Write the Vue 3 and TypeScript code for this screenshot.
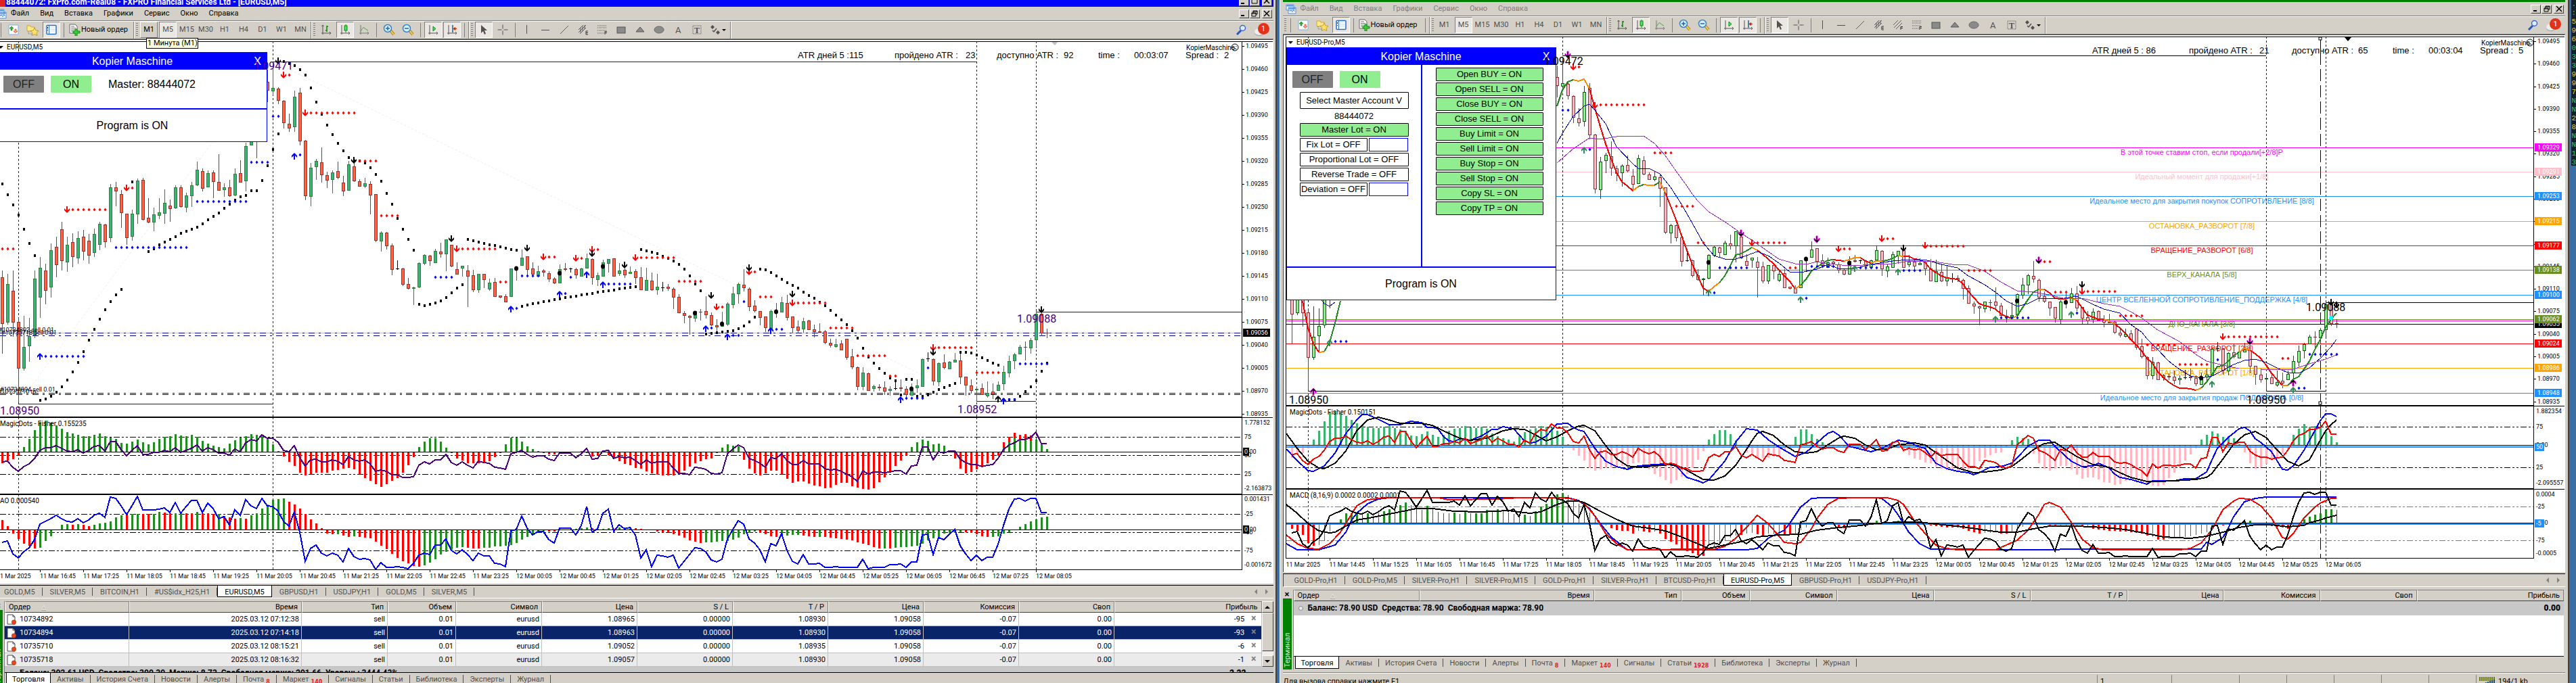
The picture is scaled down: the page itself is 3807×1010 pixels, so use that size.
<script setup lang="ts">
type Candle = { k: string; h: number; t: number; b: number; l: number }
type Mark = { i: number; y: number; kind: string }
type Pt = [number, number]

const nums = (s: string): number[] => s.trim().split(/[\s,]+/).map(Number)

const candles: Candle[] = `r400,410,479,523 g405,420,477,480 r400,430,477,498 r470,476,545,595 g467,513,545,548 g470,497,512,535
g400,412,496,500 g380,396,440,470 r390,400,430,450 g360,370,425,440 r350,365,392,410 r328,339,386,400 g350,362,388,402
r345,358,380,395 g342,352,382,390 r340,350,372,385 r346,356,378,390 g338,346,374,380 g328,331,362,370 r331,332,358,366
g272,277,352,358 r269,277,283,305 r281,287,315,337 r316,316,352,362 g310,316,350,356 g264,267,317,331 r263,266,325,326
r293,322,329,330 g307,317,329,342 g293,314,319,324 g280,300,316,331 r295,304,309,328 g274,277,308,309 r274,277,306,307
g285,289,307,314 g269,274,290,306 g239,251,274,275 r249,253,279,283 g252,256,277,277 r252,255,269,293 r228,269,282,282
g271,277,281,291 r266,277,290,291 g249,257,289,290 r237,256,270,270 g211,216,268,283 g150,160,215,215 r150,160,200,234
g110,120,180,190 r103,121,134,151 g92,130,135,141 r129,131,149,154 r148,149,182,190 r168,183,190,195 g134,143,188,195
r130,137,209,215 r207,208,290,296 g241,248,291,305 g235,238,247,266 r218,240,259,270 r254,259,267,278 g252,255,266,286
r239,253,263,265 r260,270,283,290 g238,243,282,282 r240,246,268,269 r265,268,276,276 g263,271,276,278 r268,272,289,317
r287,287,356,358 g342,344,357,372 r343,344,364,369 r360,363,399,407 d385,397,398,399 r396,397,421,423 r411,420,427,428
g424,425,427,451 g388,389,425,426 g376,377,390,392 r377,378,386,393 g368,371,389,389 r359,372,376,381 g354,354,376,401
r362,362,394,395 r388,398,406,406 g393,393,397,409 r392,400,409,454 r399,407,429,432 g405,405,429,433 r405,405,414,426
g412,418,428,430 r411,417,439,439 r437,437,440,441 r435,438,447,447 g397,397,439,439 g395,397,398,415 g369,381,393,393
r379,379,399,409 r388,397,406,409 g393,401,409,409 r398,400,403,409 r401,404,413,417 r410,412,419,420 g391,398,419,419
r389,397,399,401 d396,397,398,403 r396,398,407,412 g396,397,409,409 g375,382,397,397 r382,383,411,421 g403,407,414,423
g384,388,409,409 g383,383,390,403 r382,382,409,409 g389,400,405,408 r397,399,407,411 g394,402,405,405 r398,401,411,420
r395,410,429,429 g396,414,430,430 r403,415,429,430 g405,424,429,436 d417,425,426,431 r420,424,427,430 r425,427,440,457
r435,439,463,463 r460,463,467,478 r466,467,470,495 g460,460,471,476 r457,461,462,474 r438,460,466,471 r462,466,481,482
r472,481,484,491 g461,480,483,483 g447,449,480,482 g424,434,451,456 g418,420,435,449 r398,421,426,431 r425,427,454,460
r444,452,460,462 r460,460,470,481 r468,468,485,491 g458,460,487,493 r448,460,461,470 g439,447,462,462 r436,448,470,474
r468,468,485,493 r474,483,489,493 g470,475,487,492 r473,474,488,488 r480,487,491,499 r478,490,492,492 r488,490,507,509
r501,507,511,514 g501,509,513,514 r503,508,518,518 r501,501,529,532 r516,527,543,546 r542,543,572,577 g543,551,572,577
r551,552,578,578 g569,571,575,579 r568,572,574,578 r564,573,579,584 g571,575,578,585 d563,574,575,577 r561,573,575,579
r571,575,584,587 g567,576,585,585 g561,570,574,581 g530,531,572,572 d521,530,531,535 r530,531,564,570 g536,537,565,571
r524,536,544,546 g534,535,546,546 g522,532,536,536 r522,533,558,568 r557,557,570,585 r561,570,578,582 g571,575,577,593
r567,574,584,584 g564,581,586,588 r567,579,583,590 g564,569,578,578 g541,550,568,577 g526,534,552,558 g522,524,534,546
g510,513,524,524 r505,513,514,533 g500,503,515,523 g460,464,503,515 r458,464,493,497 r486,492,493,500`
  .split(/\s+/).map((s) => {
    const [h, t, b, l] = nums(s.slice(1))
    return { k: s[0], h, t, b, l }
  })

const fisher = nums(`-17 -13 -11 -5 7 19 32 44 46 43 39 34 29 27 25 23 23 25 27 23 21 19 13 12 15 18 14 11 14 19 22 23 26 24 23 25 22 16 12 9
7 5 12 17 21 23 26 25 24 19 11 1 -7 -15 -21 -31 -35 -33 -31 -31 -31 -28 -27 -25 -24 -26 -33 -39 -43 -48 -52 -48 -43 -39 -31 -20 -8 7 15 20
20 15 6 -2 -10 -13 -17 -17 -17 -16 -14 -8 -2 11 21 21 15 8 4 1 -2 -4 -4 -1 0 0 -1 1 -2 -7 -5 0 -5 -9 -14 -18 -20 -24 -25 -29
-32 -34 -35 -35 -35 -33 -28 -22 -17 -14 -11 -10 -2 6 11 9 8 -12 -25 -32 -35 -32 -28 -28 -33 -40 -46 -44 -44 -47 -50 -51 -54 -53 -49 -46 -46 -51 -53 -55
-56 -54 -45 -38 -30 -21 -13 -5 7 14 18 16 11 12 9 1 -10 -25 -32 -30 -26 -21 -17 -12 -6 14 22 28 25 26 24 18 12 4`)

const fisherLine = nums(`683 682 691 697 690 686 678 666 662 662 659 663 667 668 665 670 666 660 659 667 653 653 665 674 666 659 672 672 669 669 666 668 662 669 666 663 658 667 662 665
670 670 673 664 668 655 650 652 643 648 648 654 666 668 659 677 689 680 679 683 683 680 682 687 675 680 682 680 686 697 695 697 702 702 706 706 705 688 683 686
680 680 672 684 688 683 688 692 682 684 685 691 692 694 671 669 666 672 676 674 674 679 681 670 670 670 677 671 663 679 678 667 666 678 675 677 676 681 687 680
685 683 683 683 692 700 700 702 691 692 694 700 701 699 671 664 658 662 678 681 685 691 677 678 671 681 687 687 681 686 686 686 693 695 694 697 701 705 712 696
701 698 698 699 698 696 696 701 689 688 661 661 680 668 670 667 667 679 684 687 687 690 688 687 678 665 658 655 650 650 647 639 656 656`)

const parseBars = (s: string): { c: string; v: number }[] =>
  s.trim().split(/\s+/).map((p) => ({ c: p[0], v: Number(p.slice(1)) }))

const ao = parseBars(`r14 r5 r-6 r-14 r-21 r-24 r-28 g-27 g-17 g-10 g0 g7 g8 r7 g8 r7 r5 g7 g9 g10 g12 g18 g21 r22 g23 g23 r23 r23 g23 g26 r25 r24 g24 g24 r24 r24 g26 r24 r24 r23
g23 r20 r18 r16 g17 r16 g21 g24 g31 g37 g44 g45 g46 r41 r37 r31 r23 r15 r9 r2 r-6 r-7 g-7 r-9 r-11 g-10 r-11 r-12 r-13 r-18 r-24 r-29 r-36 r-42 r-47 r-50 r-54 r-55 g-53 g-49
g-44 g-37 g-33 g-30 g-27 g-26 r-27 r-28 r-28 g-27 g-27 g-25 g-25 g-24 g-23 g-20 g-15 g-11 g-7 g-4 g-2 r-3 r-3 r-1 g-1 g0 g1 g2 g3 r2 g1 g1 g2 r1 g3 g3 g3 r2 r1 r0
r-1 r-3 r-4 r-4 r-7 r-9 r-12 r-16 r-18 r-20 g-19 g-19 g-18 g-17 g-17 g-15 g-12 g-7 g-5 g-3 r-5 r-7 r-10 r-11 g-10 g-9 g-8 g-8 r-9 r-10 r-11 g-11 r-11 r-12 r-13 r-14 r-15 r-16 r-19 r-21
r-23 r-26 r-28 g-28 r-28 g-27 g-26 g-26 g-25 g-24 g-21 g-16 g-13 g-11 g-6 g-5 g-5 g-4 r-4 r-5 r-7 r-10 r-11 g-11 g-10 g-6 g-4 g0 g4 g8 g12 g15 g18 g19`)

const aoLine = nums(`802 800 819 825 816 810 798 775 771 767 762 767 771 772 767 773 769 762 759 765 735 737 748 761 748 734 754 754 754 753 751 758 743 759 749 740 740 758 744 752
767 764 776 754 762 739 748 752 737 748 749 756 771 778 757 787 830 811 806 818 822 818 821 831 811 823 827 826 828 842 832 839 839 838 839 841 833 821 818 820
806 806 797 814 819 813 820 829 818 822 822 833 834 838 785 783 763 781 791 786 786 798 803 781 781 781 791 777 749 787 782 759 753 786 776 782 780 791 825 813
838 821 822 824 821 840 830 820 810 811 816 828 831 827 797 783 770 775 797 803 813 831 804 807 789 814 830 834 820 834 834 833 839 839 838 839 839 839 839 827
841 839 839 839 835 835 834 839 831 831 791 790 820 795 798 790 783 807 819 829 821 829 824 824 805 777 753 738 737 741 737 737 758 758`)

/* upper case marks a thick bar, lower case a thin one */
const macd = parseBars(`R-9 R-12 R-18 R-30 R-34 g-33 g-27 g-13 g-2 G5 G14 G14 G13 r15 G14 r14 r14 G17 G20 r18 G26 G30 r26 r22 r19 G25 r21 r16 r14 r14 G15 r13 G16 r14 G14 G14 G19 r16 G20 r17
r15 r13 r10 G12 r10 G17 G24 G28 G38 G42 G44 r41 r33 r28 r22 r15 r7 r0 r-4 R-8 R-11 R-12 R-12 R-16 g-12 R-13 R-14 g-13 R-16 R-24 R-28 R-32 R-40 R-42 R-45 R-48 R-49 g-33 g-35 g-33
g-26 g-22 g-19 R-18 g-16 g-15 R-17 R-19 g-16 g-17 g-17 R-18 R-18 g-17 g-11 g-7 g-3 g-2 g-2 g-2 g-2 R-6 R-8 g-4 g-2 g-1 g0 g0 G3 G1 g0 G1 G3 G1 g0 g0 g0 r0 R-4 R-5
R-6 R-7 R-7 R-7 R-9 R-12 R-14 R-16 g-15 g-15 g-13 R-16 R-16 g-15 g-12 g-6 g0 g0 g0 r-1 R-4 R-6 g-6 g-6 g-6 g-5 R-6 g-5 R-9 R-10 R-11 R-12 R-12 R-13 R-13 R-14 R-15 R-16 R-19 g-21
R-25 R-25 g-24 g-23 g-22 g-21 g-20 g-18 g-16 g-14 g-10 g-6 R-4 g-3 g-2 g-1 G2 G3 r-1 r-2 R-4 R-5 R-6 R-7 R-9 g-6 g-3 G5 G9 G12 G14 G20 G20 r19`)

/* "from-to:y" spans, repeated for every bar in the span */
const spans = (s: string): Pt[] =>
  s.trim().split(/\s+/).flatMap((p) => {
    const [r, y] = p.split(':')
    const [a, b] = r.split('-').map(Number)
    const out: Pt[] = []
    for (let i = a; i <= (b ?? a); i++) out.push([i, Number(y)])
    return out
  })
const marks = (groups: Record<string, string>): Mark[] =>
  Object.entries(groups).flatMap(([kind, s]) => spans(s).map(([i, y]) => ({ i, y, kind })))

const sarStart = (from: number, s: string): Pt[] => nums(s).map((y, n) => [from + n, y] as Pt)
const sar: Pt[] = [
  ...sarStart(0, '272 288 303 318 339 360 378 592 590 586 580 572 562 550 536 520 503 487 472 458 446 436 428'),
  [24, 269],
  ...sarStart(27, '372 368 362 358 354 350 345 342 339 336 331 325 320 315 308 302 296 291 289 282 282 267 245 221 198 91 94 97 103 111 130 151 169 185 199 212 223 233 238 238 241 248 258 268 286 302 323 339 354 370 450 452 450 448 445 440 433 426 421 354 356 358 360 362 363 365 367 369 370 453 451 449 448 446 445 443 442 440 439 438 436 435 434 432 431 430 429 427 426 425 424 369 371 373 375 379 382 386 391 398 408 420 430 494 493 492 491 490 489 486 482 476 469 398 399 403 408 413 418 422 426 432 437 441 447 452 459 466 473 480 489 500 515 528 537 545 552 559 563 584 561 561 586 586 584 580 576 573 570 567 521 521 522 525 529 533 537 540 591 591 591 586 579 572 563 549 537'),
]

const leftMarks = marks({
  rd: '0-2:368 13-19:310 24:278 53:111 57-65:167 66-69:238 70-73:319 85-91:368 92-93:417 101-102:380 107:382 110:369 118-124:381 125-129:416 133:454 139:402 140-142:439 147-152:448 153-157:485 158-163:526 164-165:556 173-179:514 180-184:551',
  bd: '8-15:527 50-51:172 55:229 46-49:240 36-45:298 21-34:366 80-83:410 95:456 96-99:408 104:434 105:410 112-116:420 131:485 135-136:496 137:446 143-144:487 167-170:589 171:544 186-187:591 188-193:538',
  ra: '12:310 23:278 52:111 56:167 84:368 100:380 106:382 109:369 117:381 132:454 138:402 146:448 172:514',
  ba: '7:527 54:231 94:457 103:435 108:406 111:421 130:486 134:498 142:489 166:591 185:593',
  ka: '51:90 65:237 83:353 97:367 109:375 115:392 131:437 138:396 146:435 172:521 192:458',
  ku: '184:590',
  ko: '95:397 103:404 111:394 128:463 133:479 143:461 168:575',
})
const rightMarks = marks({
  rd: '53:99 57-65:155 67-70:226 71-74:305 75-76:359 86-91:359 92-93:396 102-103:368 110-111:353 118-124:364 125-129:400 139-140:387 141-143:432 147-152:431 153-157:467 158-163:510 164-169:539 173-182:498 183-184:530',
  bd: '50-51:163 55:221 8-10:505 78:433 79-84:396 95:441 96-100:394 105-108:396 113-116:400 131-136:470 145:463 171:532 186-187:574 188-193:524',
  ra: '52:99 56:156 85:359 101:368 109:353 117:363 146:431 172:498',
  ga: '54:222 7:507 77:433 94:443 104:397 112:402 130:472 144:465 170:568 185:577',
  ma: '51:81 83:345 97:354 138:385 177:505',
  mu: '4:579 185:566',
  ka: '113:367 146:421 192:447 193:451',
  ko: '77:388 95:383 103:389 134:445 143:447 168:559',
  co: '192:470',
})

const pairs = (s: string): Pt[] => s.trim().split(/\s+/).map((p) => p.split(':').map(Number) as Pt)

const trend: { c: string; p: Pt[] }[] = [
  ['red', '2:445 3:485 4:508 5:521'], ['darkorange', '5:521 6:520'], ['forestgreen', '6:520 7:506 8:478 9:445'],
  ['forestgreen', '49:157 50:133 51:121 52:118'], ['darkorange', '52:118 53:120 54:117 55:131'],
  ['red', '55:131 56:160 57:187 58:213 59:235 60:255 61:269 62:275 63:282'], ['darkorange', '63:282 64:276'], ['forestgreen', '64:276 65:273'],
  ['darkorange', '65:273 66:274 67:274'], ['forestgreen', '67:274 68:269'], ['darkorange', '68:269 69:285'],
  ['red', '69:285 70:305 71:325 72:348 73:370 74:391 75:408 76:426 77:431'], ['darkorange', '77:431 78:424 79:418'],
  ['forestgreen', '79:418 80:408 81:393 82:377 83:375 84:371 85:366'], ['darkorange', '85:366 86:370'],
  ['red', '86:370 87:376 88:383 89:390 90:399 91:408 92:416 93:427'], ['darkorange', '93:427 94:422'],
  ['forestgreen', '94:422 95:413 96:401 97:395 98:390 99:385 100:384'], ['red', '100:384 101:385 102:386'], ['darkorange', '102:386 103:384 104:381 105:381'],
  ['red', '105:381 106:386 107:389'], ['darkorange', '107:389 108:386 109:386'], ['forestgreen', '109:386 110:385 111:382 112:378'], ['darkorange', '112:378 113:379'],
  ['red', '113:379 114:379 115:383 116:384 117:388 118:398 119:403 120:408 121:411 122:412 123:413 124:420 125:431 126:440 127:449 128:452 129:454 130:457 131:464 132:468 133:471'],
  ['darkorange', '133:471 134:467'], ['forestgreen', '134:467 135:455 136:443 137:432 138:428'], ['darkorange', '138:428 139:428'],
  ['red', '139:428 140:433 141:441 142:442 143:442'], ['darkorange', '143:442 144:440 145:444'], ['red', '145:444 146:455 147:466 148:469 149:472 150:472'],
  ['darkorange', '150:472 151:475 152:479'], ['red', '152:479 153:485 154:493 155:502 156:510 157:519 158:530 159:537 160:550 161:558 162:565 163:570 164:574 165:574 166:575 167:577'],
  ['darkorange', '167:577 168:574'], ['forestgreen', '168:574 169:565 170:554 171:542 172:541 173:534 174:526 175:521'], ['darkorange', '175:521 176:515 177:518'],
  ['red', '177:518 178:523 179:530 180:540 181:552 182:561 183:570'], ['darkorange', '183:570 184:570'],
  ['forestgreen', '184:570 185:561 186:557 187:546 188:534 189:517 190:502 191:484 192:472 193:463'],
].map(([c, p]) => ({ c, p: pairs(p) }))

const fastMa = pairs('49:212 50:197 52:172 54:157 55:154 56:163 58:183 60:217 63:242 64:249 66:249 68:257 70:277 72:302 74:330 76:359 78:378 80:383 82:383 84:378 86:372 88:378 90:389 92:402 94:403 97:398 99:391 101:397 104:397 107:391 111:386 114:384 117:384 120:391 123:396 125:408 128:421 130:432 132:445 134:453 136:449 138:441 142:442 145:438 148:450 150:457 153:463 155:480 157:491 158:501 160:517 162:534 164:546 166:556 168:559 170:556 172:548 174:539 176:533 178:531 180:536 182:544 184:551 186:552 188:544 190:530 192:513 193:502')
const slowMa = pairs('49:241 52:220 55:204 57:206 60:202 62:201 65:201 67:212 69:230 71:253 73:275 74:287 75:297 77:313 80:328 82:339 83:345 85:355 88:372 90:383 93:390 95:391 97:387 99:390 103:393 108:391 111:390 114:386 118:386 122:391 125:392 128:401 131:417 134:430 137:432 140:436 143:442 146:441 150:449 153:453 155:461 157:470 160:488 164:505 167:524 169:534 172:540 175:545')
const slowMa2 = pairs('179:546 185:546 188:538 191:531 193:525')
const dipMa = pairs('5:438 6:449 7:453 8:447')

const osBlue = pairs('-1:664 1:681 3:696 4:697 6:689 8:670 10:641 12:621 13:613 14:613 16:620 18:628 20:628 22:623 24:625 25:632 26:632 27:634 28:645 29:652 30:653 31:649 33:651 35:645 37:635 38:635 39:631 41:634 43:652 44:655 45:654 47:645 49:627 51:626 52:632 53:636 54:638 56:663 58:682 60:690 62:694 64:689 67:687 69:686 71:689 73:706 75:711 76:714 77:710 80:682 82:654 84:634 86:636 88:650 90:661 93:675 95:669 97:655 99:641 100:638 101:643 103:660 105:664 107:668 109:663 111:655 112:651 114:654 116:661 117:663 119:685 121:693 123:697 125:699 126:702 127:699 129:691 131:690 133:685 134:677 136:660 138:651 140:651 141:660 143:675 144:682 146:690 148:689 149:685 151:692 152:701 153:706 155:709 158:716 159:711 163:711 165:708 167:708 168:703 169:698 170:680 171:663 173:647 175:634 176:632 177:637 178:649 179:654 181:668 183:694 184:695 185:689 187:666 189:637 190:622 191:612 192:612 193:616')
const osBlack = pairs('-1:641 1:663 3:682 5:692 6:693 8:685 10:667 12:637 14:621 16:617 18:621 20:626 22:626 24:626 26:629 28:637 31:648 33:651 36:648 39:637 41:634 43:635 45:643 47:652 49:646 51:637 53:630 54:629 56:637 58:659 60:678 62:689 64:691 67:689 70:687 72:691 74:700 76:709 78:710 80:704 82:688 84:665 85:652 86:641 87:638 89:644 91:658 93:668 95:670 97:668 99:658 101:648 102:645 104:648 106:658 108:665 110:664 112:658 115:655 117:658 120:675 123:692 126:699 128:698 131:695 133:690 135:678 137:665 139:656 141:654 143:665 145:675 148:687 151:691 153:699 155:706 158:712 160:712 163:711 167:709 169:706 170:700 172:679 174:657 176:643 178:638 180:647 182:665 184:682 186:689 188:680 190:651 191:637 192:628 193:621')
const mBlue = pairs('-1:804 1:813 5:813 8:806 10:787 11:770 12:759 14:745 16:738 18:736 51:736 53:740 55:752 57:774 59:794 61:807 62:813 84:813 86:811 88:796 91:784 92:774 94:750 96:737 98:736 108:736 109:737 111:750 112:761 114:787 116:804 118:812 134:813 150:812 168:812 169:802 170:805 172:795 173:781 174:764 176:742 178:737 180:735 193:735')
const mRed = pairs('-1:791 1:804 3:811 5:812 7:804 9:787 10:774 12:748 14:739 17:736 27:736 29:739 38:738 42:736 50:736 52:738 54:744 56:763 58:789 60:804 62:813 78:812 80:808 82:796 84:780 86:762 88:774 90:793 91:802 93:804 94:802 96:782 97:767 99:746 101:737 104:736 110:736 112:740 113:746 115:770 117:789 119:806 121:811 123:813 130:813 132:806 134:799 136:784 138:761 139:746 140:743 142:750 144:772 146:797 148:810 150:813 164:813 166:811 168:803 170:783 172:754 174:741 175:737 177:738 179:748 181:766 183:795 184:797 185:789 187:766 189:750 190:744 192:737 193:737')
const mSlow = pairs('-1:746 1:759 3:774 5:785 7:788 8:787 10:778 12:769 15:765 18:760 20:757 23:752 26:752 30:756 35:757 40:755 44:759 46:757 49:746 51:741 53:741 54:743 57:756 60:768 63:778 66:781 69:785 72:794 75:804 77:811 80:806 83:801 86:794 90:791 94:790 97:784 101:780 104:778 108:774 112:772 116:772 119:775 124:779 128:784 131:787 134:787 137:782 140:778 145:778 150:780 154:783 158:789 161:794 166:796 169:793 172:787 175:780 178:776 181:776 184:779 187:777 188:773 190:769 191:766 193:762')

interface Scale { y: number; t: string; bg?: string; tick?: boolean }
interface Pane { kind: string; top: number; h: number; base: number; levels: number[]; label: string; labels: Scale[] }
const priceScale = (y0: number, step: number): Scale[] =>
  Array.from({ length: 17 }, (_, n) => ({ y: Math.round(y0 + n * step), t: (1.09495 - n * 0.00035).toFixed(5), tick: true }))

const M = '#ff00ff', P = '#ffc0cb', D = '#1e90ff', O = '#ffa500', R = '#ff0000', G = '#6b8e23'
const murrey = [
  { y: 218, c: M, p: '1.09329', t: 'В этой точке ставим стоп, если продали[+2/8]P' },
  { y: 254, c: P, p: '1.09291', t: 'Идеальный момент для продажи[+1/8]' },
  { y: 290, c: D, p: '1.09253', t: 'Идеальное место для закрытия покупок СОПРОТИВЛЕНИЕ [8/8]' },
  { y: 327, c: O, p: '1.09215', t: 'ОСТАНОВКА_РАЗВОРОТ [7/8]' },
  { y: 363, c: R, p: '1.09177', t: 'ВРАЩЕНИЕ_РАЗВОРОТ [6/8]' },
  { y: 399, c: G, p: '1.09138', t: 'ВЕРХ_КАНАЛА [5/8]' },
  { y: 436, c: D, p: '1.09100', t: 'ЦЕНТР ВСЕЛЕННОЙ СОПРОТИВЛЕНИЕ_ПОДДЕРЖКА [4/8]' },
  { y: 472, c: G, p: '1.09062', t: 'ДНО_КАНАЛА [3/8]' },
  { y: 508, c: R, p: '1.09024', t: 'ВРАЩЕНИЕ_РАЗВОРОТ [2/8]' },
  { y: 544, c: O, p: '1.08986', t: 'ОСТАНОВКА_РАЗВОРОТ [1/8]' },
  { y: 581, c: D, p: '1.08948', t: 'Идеальное место для закрытия продаж ПОДДЕРЖКА [0/8]' },
]

interface Win {
  id: string; x0: number; title: string; symbol: string; panes: Pane[]; times: string[]
  head: [string, number][]; headY: number; eaX: number; tabs: string[]; active: string
  widths: number[]; cross: number[]
}
const clock = (d: number, h: number, m: number, n: number): string[] => {
  const out: string[] = []
  let day = d, t = h * 60 + m
  for (let k = 0; k < n; k++) {
    if (t >= 1440) { t -= 1440; day++ }
    out.push(`${day} Mar ${String(Math.floor(t / 60)).padStart(2, '0')}:${String(t % 60).padStart(2, '0')}`)
    t += 40
  }
  return out
}

const wins: Win[] = [
  {
    id: 'left', x0: 3, title: '88444072: FxPro.com-Real08 - FXPRO Financial Services Ltd - [EURUSD,M5]', symbol: 'EURUSD,M5',
    panes: [
      { kind: 'price', top: 61, h: 555, base: 0, levels: [], label: '', labels: [...priceScale(68, 34), { y: 492, t: '1.09056', bg: '#000' }] },
      { kind: 'fisher', top: 617, h: 113, base: 668, levels: [646, 673, 701], label: 'MagicDots - Fisher 0.155235', labels: [{ y: 625, t: '1.778152' }, { y: 646, t: '75' }, { y: 673, t: '30' }, { y: 668, t: '0.00' }, { y: 668, t: '0', bg: '#000' }, { y: 701, t: '25' }, { y: 722, t: '-2.163873' }] },
      { kind: 'ao', top: 731, h: 111, base: 783, levels: [760, 787, 814], label: 'AO 0.000540', labels: [{ y: 738, t: '0.001431' }, { y: 760, t: '-25' }, { y: 787, t: '-50' }, { y: 783, t: '0.00' }, { y: 783, t: '0', bg: '#000' }, { y: 814, t: '-75' }, { y: 835, t: '-0.001672' }] },
    ],
    times: ['11 Mar 2025', ...clock(11, 16, 45, 24)],
    head: [['ATR дней 5 :115', 1179], ['пройдено ATR :', 1322], ['23', 1427], ['доступно ATR :', 1473], ['92', 1572], ['time :', 1623], ['00:03:07', 1676], ['Spread :', 1752], ['2', 1809]],
    headY: 86, eaX: 1753, tabs: ['GOLD,M5', 'SILVER,M5', 'BITCOIN,H1', '#US$idx_H25,H1', 'EURUSD,M5', 'GBPUSD,H1', 'USDJPY,H1', 'GOLD,M5', 'SILVER,M5'], active: 'EURUSD,M5',
    widths: [184, 255, 127, 101, 127, 141, 141, 141, 141, 141, 141], cross: [27, 403, 1443, 1531],
  },
  {
    id: 'right', x0: 8, title: '', symbol: 'EURUSD-Pro,M5',
    panes: [
      { kind: 'price', top: 54, h: 545, base: 0, levels: [], label: '', labels: [...priceScale(61, 33.29), { y: 479, t: '1.09055', bg: '#000' }, ...murrey.map((m) => ({ y: m.y, t: m.p, bg: m.c }))] },
      { kind: 'fisher', top: 600, h: 122, base: 658, levels: [631, 691], label: 'MagicDots - Fisher 0.150151', labels: [{ y: 608, t: '1.882354' }, { y: 631, t: '75' }, { y: 658, t: '0.00' }, { y: 661, t: '50', bg: D }, { y: 691, t: '25' }, { y: 714, t: '-2.095557' }] },
      { kind: 'macd', top: 723, h: 102, base: 773, levels: [749, 799], label: 'MACD (8,16,9) 0.0002 0.0002 0.0001', labels: [{ y: 731, t: '0.0004' }, { y: 749, t: '-25' }, { y: 773, t: '0.00' }, { y: 774, t: '-5', bg: D }, { y: 799, t: '-75' }, { y: 818, t: '-0.0005' }] },
    ],
    times: ['11 Mar 2025', ...clock(11, 14, 45, 24)],
    head: [['ATR дней 5 : 86', 1191], ['пройдено ATR :', 1334], ['21', 1438], ['доступно ATR :', 1486], ['65', 1584], ['time :', 1635], ['00:03:04', 1688], ['Spread :', 1764], ['5', 1821]],
    headY: 79, eaX: 1766, tabs: ['GOLD-Pro,H1', 'GOLD-Pro,M5', 'SILVER-Pro,H1', 'SILVER-Pro,M15', 'GOLD-Pro,H1', 'SILVER-Pro,H1', 'BTCUSD-Pro,H1', 'EURUSD-Pro,M5', 'GBPUSD-Pro,H1', 'USDJPY-Pro,H1'], active: 'EURUSD-Pro,M5',
    widths: [186, 258, 129, 101, 129, 143, 143, 143, 142, 143, 143], cross: [32, 408, 1448, 1536],
  },
]

const cx = (w: Win, i: number): number => w.x0 + 8 * i
const candleY = (w: Win, y: number): number => (w.id === 'left' ? y : Math.round(y * 0.9792 - 4.2))
const line = (w: Win, p: Pt[]): string => p.map(([i, y]) => `${cx(w, i)},${y}`).join(' ')
const series = (w: Win, v: number[], f: (y: number) => number = (y) => y): string =>
  v.map((y, i) => `${cx(w, i)},${Math.round(f(y))}`).join(' ')
const fisherY = (w: Win) => (y: number) => (w.id === 'left' ? y : 631.3 + (y - 646.5) * 1.106)
const aoOnRight = (y: number) => 749.3 + (y - 760.3) * 0.931
const barTop = (base: number, v: number): number => (v > 0 ? base - v : base)
const barColor = (c: string): string => (c.toLowerCase() === 'g' ? 'forestgreen' : 'red')
const scaled = (w: Win, v: number): number => (w.id === 'left' ? v : Math.round(v * 1.09))

const menu = ['Файл', 'Вид', 'Вставка', 'Графики', 'Сервис', 'Окно', 'Справка']
const frames = ['M1', 'M5', 'M15', 'M30', 'H1', 'H4', 'D1', 'W1', 'MN']
const columns = ['Ордер', 'Время', 'Тип', 'Объем', 'Символ', 'Цена', 'S / L', 'T / P', 'Цена', 'Комиссия', 'Своп', 'Прибыль']
const orders = [
  ['10734892', '2025.03.12 07:12:38', 'sell', '0.01', 'eurusd', '1.08965', '0.00000', '1.08930', '1.09058', '-0.07', '0.00', '-95'],
  ['10734894', '2025.03.12 07:14:18', 'sell', '0.01', 'eurusd', '1.08963', '0.00000', '1.08930', '1.09058', '-0.07', '0.00', '-93'],
  ['10735710', '2025.03.12 08:15:21', 'sell', '0.01', 'eurusd', '1.09052', '0.00000', '1.08935', '1.09058', '-0.07', '0.00', '-6'],
  ['10735718', '2025.03.12 08:16:32', 'sell', '0.01', 'eurusd', '1.09057', '0.00000', '1.08930', '1.09058', '-0.07', '0.00', '-1'],
]
const footTabs = (id: string): [string, string][] => [
  ['Торговля', ''], ['Активы', ''], ['История Счета', ''], ['Новости', ''], ['Алерты', ''], ['Почта', '8'], ['Маркет', '140'],
  ['Сигналы', ''], ['Статьи', id === 'right' ? '1928' : ''], ['Библиотека', ''], ['Эксперты', ''], ['Журнал', ''],
]
const copyModes = ['Open BUY', 'Open SELL', 'Close BUY', 'Close SELL', 'Buy Limit', 'Sell Limit', 'Buy Stop', 'Sell Stop', 'Copy SL', 'Copy TP']
const drawTools = (id: string) => ['vline', 'hline', 'trendline', 'equi', ...(id === 'right' ? ['channel'] : []), 'fibo', 'rect', 'tri', 'ellipse', 'letter', 'label']
const ticker: [string, string][] = [['3.', 'g'], ['2:', 'g'], ['5', 'y'], ['9', 'y'], ['6', 'y'], ['0', 'g'], ['3', 'g'], ['3', 'g'], ['9', 'y'], ['9', 'y'], ['7', 'y'], ['N', 'g'], ['N', 'g'], ['2', 'y'], ['8', 'y'], ['N', 'g'], ['N', 'g'], ['1', 'g'], ['3', 'g']]
</script>

<template>
  <svg class="defs" aria-hidden="true">
    <symbol id="i-app" viewBox="0 0 16 16"><path d="M1 2h11v8H1zM4 6h11v9H4z" fill="#fff" stroke="#4d8fe0" /><path d="M1.500 3.500h10M4.500 7.500h10" stroke="#4d8fe0" stroke-width="2" /><path d="M6 12l2-2 2 3 2-3 2 2" fill="none" stroke="#4d8fe0" /></symbol>
    <symbol id="i-new" viewBox="0 0 16 16"><rect x="1" y="1" width="14" height="14" rx="1" fill="#fff" stroke="#78aede" /><path d="M5 3l3 3H6v3H4V6H2z" fill="#2fb02f" stroke="#087808" stroke-width=".6" /><path d="M11 13L8 10h2V7h2v3h2z" fill="#ffa27a" stroke="#d53c10" stroke-width=".6" /></symbol>
    <symbol id="i-fav" viewBox="0 0 18 18"><path d="M1 3h5l1 2h5v6H1z" fill="#ffe98f" stroke="#d0a42c" /><path d="M3 11v4h5" stroke="#777" fill="none" stroke-dasharray="1 1" /><path d="M12 6l2 4 4 .5-3 3 .8 4.200L12 15.500 8.200 17.500 9 13.500 6 10.500 10 10z" fill="#ffe36b" stroke="#b98a15" stroke-width=".8" /></symbol>
    <symbol id="i-list" viewBox="0 0 16 16"><rect x="1" y="1.500" width="14" height="13" rx="1" fill="#fff" stroke="#2b6fc4" stroke-width="1.500" /><path d="M4.500 2v12" stroke="#2b6fc4" /><path d="M6 5h8M6 7.500h8M6 10h8" stroke="#cfe0f5" /><path d="M2.500 4v2M2.500 8v1" stroke="#222" /></symbol>
    <symbol id="i-order" viewBox="0 0 18 18"><path d="M2 1h8l3 3v10H2z" fill="#fff" stroke="#666" /><path d="M4 4h5M4 6.500h7M4 9h6M4 11h3" stroke="#777" /><path d="M10 8h3v3h4v3h-4v4h-3v-4H7v-3h3z" fill="#3ecb3e" stroke="#0c8a0c" /></symbol>
    <symbol id="i-bars" viewBox="0 0 16 16"><path d="M3 1v14M1 13h14M13 11l2 2-2 2M1.500 3L3 1l1.500 2" fill="none" stroke="#555" /><path d="M9 2v9M9 3h2M7 9h2" stroke="#0a8a0a" stroke-width="1.500" /></symbol>
    <symbol id="i-candles" viewBox="0 0 16 16"><path d="M3 1v14M1 13h14M13 11l2 2-2 2" fill="none" stroke="#555" /><path d="M9 0v12" stroke="#0a8a0a" /><rect x="7" y="2" width="4" height="7" fill="#4ee06a" stroke="#0a8a0a" /></symbol>
    <symbol id="i-line" viewBox="0 0 16 16"><path d="M3 1v14M1 13h14M13 11l2 2-2 2" fill="none" stroke="#777" /><path d="M3 10c2-2 3-6 5-5s3 3 6 4" fill="none" stroke="#3aa03a" /></symbol>
    <symbol id="i-zin" viewBox="0 0 18 18"><path d="M11 10l5 6" stroke="#a07a10" stroke-width="4" /><path d="M11 10l5 6" stroke="#f5cf4e" stroke-width="2" /><circle cx="7" cy="7" r="5.500" fill="#d4efff" stroke="#4182bd" stroke-width="1.500" /><path d="M4 7h6M7 4v6" stroke="#2267a8" stroke-width="1.500" /></symbol>
    <symbol id="i-zout" viewBox="0 0 18 18"><path d="M11 10l5 6" stroke="#a07a10" stroke-width="4" /><path d="M11 10l5 6" stroke="#f5cf4e" stroke-width="2" /><circle cx="7" cy="7" r="5.500" fill="#d4efff" stroke="#4182bd" stroke-width="1.500" /><path d="M4 7h6" stroke="#2267a8" stroke-width="1.500" /></symbol>
    <symbol id="i-scroll" viewBox="0 0 16 16"><path d="M3 1v14M1 13h14M13 11l2 2-2 2" fill="none" stroke="#555" /><path d="M8 3l4 3.500L8 10z" fill="#4ee06a" stroke="#0a8a0a" /></symbol>
    <symbol id="i-shift" viewBox="0 0 16 16"><path d="M3 1v14M1 13h14M13 11l2 2-2 2" fill="none" stroke="#555" /><path d="M9 1v11" stroke="#1c5f9c" stroke-width="1.500" /><path d="M15 6.500h-4M13 4.500l-2.500 2 2.500 2" fill="none" stroke="#c03000" stroke-width="1.500" /></symbol>
    <symbol id="i-cursor" viewBox="0 0 16 16"><path d="M4 1v12l3-3 2 5 2-1-2-5h4z" fill="#505050" /></symbol>
    <symbol id="i-cross" viewBox="0 0 16 16"><path d="M8 .5v6M8 9.500v6M.5 8h6M9.500 8h6" stroke="#505050" /></symbol>
    <symbol id="i-vline" viewBox="0 0 16 16"><path d="M8.500 1v13" stroke="#505050" /></symbol>
    <symbol id="i-hline" viewBox="0 0 16 16"><path d="M2 8.500h12" stroke="#505050" /></symbol>
    <symbol id="i-trendline" viewBox="0 0 16 16"><path d="M2 14L14 2" stroke="#606060" /></symbol>
    <symbol id="i-equi" viewBox="0 0 16 16"><path d="M1 8l7-7M1 12L12 1M3 14l9-9M4 5v7M7 3v7M10 1v6" stroke="#505050" stroke-width=".9" /><path d="M15 10h-3v5h3M12 12.500h3" fill="none" stroke="#333" /></symbol>
    <symbol id="i-channel" viewBox="0 0 16 16"><path d="M1 8l7-7M2 12L13 1M5 14l9-9" stroke="#606060" /><path d="M15 10.500h-3V15M12 12.500h3" fill="none" stroke="#333" /></symbol>
    <symbol id="i-fibo" viewBox="0 0 16 16"><path d="M1 2h13M1 5h13M1 9h13M1 13h9" stroke="#505050" stroke-dasharray="1 1" /><path d="M15 10.500h-3V15M12 12.500h3" fill="none" stroke="#333" /></symbol>
    <symbol id="i-rect" viewBox="0 0 16 16"><rect x="2" y="4" width="12" height="9" fill="#8a8a8a" stroke="#555" /></symbol>
    <symbol id="i-tri" viewBox="0 0 16 16"><path d="M8 4l6 7H2z" fill="#8a8a8a" stroke="#555" /></symbol>
    <symbol id="i-ellipse" viewBox="0 0 16 16"><ellipse cx="8" cy="8" rx="7" ry="5" fill="#8a8a8a" stroke="#666" /></symbol>
    <symbol id="i-letter" viewBox="0 0 16 16"><text x="4" y="13" font-size="13" font-family="Roboto" fill="#505050">A</text></symbol>
    <symbol id="i-label" viewBox="0 0 16 16"><rect x="2" y="2" width="12" height="12" fill="none" stroke="#505050" stroke-dasharray="1 1" /><text x="4" y="13" font-size="12" font-weight="700" font-family="Liberation Serif" fill="#505050">T</text></symbol>
    <symbol id="i-arrows" viewBox="0 0 16 16"><path d="M1 4l3-3 3 3-3 3zM9 12l3-3 3 3-3 3z" fill="#505050" /><path d="M4 9l2 2 4-5" fill="none" stroke="#505050" stroke-width="1.500" /></symbol>
    <symbol id="i-find" viewBox="0 0 16 16"><path d="M8 9l-6 6" stroke="#2b55c0" stroke-width="3" /><circle cx="10.500" cy="5.500" r="4" fill="#dcecff" stroke="#3b67cc" stroke-width="1.500" /></symbol>
    <symbol id="i-doc" viewBox="0 0 14 16"><path d="M1 1h8l3 3v11H1z" fill="#fff" stroke="#444" /><path d="M9 1v3h3" fill="none" stroke="#444" /><circle cx="10.500" cy="12" r="3.200" fill="#e64a1c" stroke="#a02a08" stroke-width=".6" /></symbol>
  </svg>

  <main class="desk">
    <section v-for="w in wins" :key="w.id" class="win" :class="w.id">
      <header class="title">
        <i v-if="w.id === 'left'" class="logo"></i><span>{{ w.title }}</span>
        <div v-if="w.id === 'left'" class="sys"><button aria-label="Свернуть"><svg viewBox="0 0 12 10"><path d="M2 8h5" stroke="#000" stroke-width="2" /></svg></button><button aria-label="Развернуть"><svg viewBox="0 0 12 10"><path d="M2 0h8v8H2z" fill="none" stroke="#000" /></svg></button><button aria-label="Закрыть"><svg viewBox="0 0 12 10"><path d="M2 0l8 8M10 0L2 8" stroke="#000" stroke-width="1.500" /></svg></button></div>
      </header>

      <nav class="menubar">
        <svg class="ic"><use href="#i-app" /></svg>
        <a v-for="m in menu" :key="m" href="#">{{ m }}</a>
        <div class="sys">
          <button aria-label="Свернуть"><svg viewBox="0 0 12 10"><path d="M2 8h5" stroke="#000" stroke-width="2" /></svg></button>
          <button aria-label="Восстановить"><svg viewBox="0 0 12 10"><path d="M4 4V1h6v5H8M2 4h6v5H2zM2 5h6M4 2h6" fill="none" stroke="#000" /></svg></button>
          <button aria-label="Закрыть"><svg viewBox="0 0 12 10"><path d="M2 1l8 8M10 1L2 9" stroke="#000" stroke-width="1.500" /></svg></button>
        </div>
      </nav>

      <div class="toolbar">
        <i class="grip"></i><i class="sep"></i>
        <button class="tb" aria-label="Новый график"><svg class="ic"><use href="#i-new" /></svg></button>
        <button class="tb" aria-label="Профили"><svg class="ic big"><use href="#i-fav" /></svg></button>
        <button class="tb on" aria-label="Навигатор"><svg class="ic"><use href="#i-list" /></svg></button>
        <i class="sep"></i>
        <button class="order"><svg class="ic big"><use href="#i-order" /></svg>Новый ордер</button>
        <i v-if="w.id === 'right'" class="sep"></i><i class="edge"></i><i class="grip"></i>
        <button v-for="f in frames" :key="f" class="tb tf" :class="{ on: f === 'M5', hot: f === 'M1' && w.id === 'left' }">{{ f }}</button>
        <i class="edge"></i><i class="grip"></i>
        <button class="tb" aria-label="Бары"><svg class="ic"><use href="#i-bars" /></svg></button>
        <button class="tb on" aria-label="Свечи"><svg class="ic"><use href="#i-candles" /></svg></button>
        <button class="tb" aria-label="Линия"><svg class="ic"><use href="#i-line" /></svg></button>
        <i class="sep"></i>
        <button class="tb" aria-label="Увеличить"><svg class="ic big"><use href="#i-zin" /></svg></button>
        <button class="tb" aria-label="Уменьшить"><svg class="ic big"><use href="#i-zout" /></svg></button>
        <i class="sep"></i>
        <button class="tb on" aria-label="Автопрокрутка"><svg class="ic"><use href="#i-scroll" /></svg></button>
        <button class="tb on" aria-label="Сдвиг графика"><svg class="ic"><use href="#i-shift" /></svg></button>
        <i class="sep"></i><i class="edge"></i><i class="grip"></i>
        <button class="tb on" aria-label="Курсор"><svg class="ic"><use href="#i-cursor" /></svg></button>
        <button class="tb" aria-label="Перекрестие"><svg class="ic"><use href="#i-cross" /></svg></button>
        <i class="sep wide"></i>
        <button v-for="t in drawTools(w.id)" :key="t" class="tb" :aria-label="t"><svg class="ic"><use :href="'#i-' + t" /></svg></button>
        <button class="tb arrows" aria-label="Стрелки"><svg class="ic"><use href="#i-arrows" /></svg><i class="caret"></i></button>
        <i class="edge"></i>
        <div class="tools-end">
          <svg class="ic"><use href="#i-find" /></svg>
          <span class="bubble"><b>1</b></span>
        </div>
      </div>
      <div v-if="w.id === 'left'" class="tip">1 Минута (M1)</div>

      <div class="chart">
        <div v-for="p in w.panes" :key="p.kind" class="pane">
          <svg class="plot" :height="p.h">
            <g :transform="`translate(0 ${-p.top - 1})`">
              <template v-if="p.kind === 'price' && w.id === 'left'">
                <path d="M27 597L403 91L1443 593L1531 461" class="ghost" />
                <g class="crisp">
                  <line x1="0" x2="100%" y1="492" y2="492" stroke="#c0c0c0" />
                  <line v-for="y in [492, 496, 581, 583]" :key="y" x1="0" x2="100%" :y1="y" :y2="y" class="navy" />
                  <path d="M27 597H403M403 91H1443M1443 593H1531M1531 461H4000" class="indigo" />
                </g>
              </template>
              <template v-if="p.kind === 'price' && w.id === 'right'">
                <g class="crisp">
                  <line v-for="m in murrey" :key="m.y" x1="0" x2="100%" :y1="m.y" :y2="m.y" :stroke="m.c" />
                  <line x1="0" x2="100%" y1="474" y2="474" stroke="#ff00ff" />
                  <line x1="0" x2="100%" y1="479" y2="479" stroke="#000" />
                  <path d="M32 578H408M408 82H1448M1448 578H1536M1536 447H4000" stroke="#000" fill="none" />
                </g>
                <text v-for="m in murrey" :key="m.t" x="1353" :y="m.y + 11" :fill="m.c" class="mur">{{ m.t }}</text>
              </template>

              <line v-for="c in w.cross" :key="c" :x1="c" :x2="c" :y1="p.top" :y2="p.top + p.h" class="session crisp" />
              <line v-if="w.id === 'right'" x1="1528" x2="1528" :y1="p.top" :y2="p.top + p.h" class="cursor crisp" />

              <template v-if="p.kind === 'price'">
                <g class="crisp">
                  <g v-for="(c, i) in candles" :key="i" :class="'c-' + c.k">
                    <rect :x="cx(w, i)" :y="candleY(w, c.h)" width="1" :height="Math.max(1, candleY(w, c.l) - candleY(w, c.h))" class="wick" />
                    <rect :x="cx(w, i) - 2" :y="candleY(w, c.t)" width="5" :height="Math.max(1, candleY(w, c.b) - candleY(w, c.t))" class="edge-box" />
                    <rect v-if="c.b - c.t > 2" :x="cx(w, i) - 1" :y="candleY(w, c.t) + 1" width="3" :height="Math.max(1, candleY(w, c.b) - candleY(w, c.t) - 2)" class="body" />
                  </g>
                </g>
                <template v-if="w.id === 'left'">
                  <rect v-for="([i, y], n) in sar" :key="n" :x="cx(w, i) - 1" :y="y - 2" width="3" height="4" fill="#000" />
                </template>
                <template v-else>
                  <polyline v-for="(t, n) in trend" :key="n" :points="line(w, t.p)" :stroke="t.c" class="thick" />
                  <polyline :points="line(w, fastMa)" stroke="#0000cd" class="thin" />
                  <polyline :points="line(w, dipMa)" stroke="#0000cd" class="thin" />
                  <polyline :points="line(w, slowMa)" stroke="#9932cc" class="thin" />
                  <polyline :points="line(w, slowMa2)" stroke="#9932cc" class="thin" />
                </template>
                <g v-for="(m, n) in (w.id === 'left' ? leftMarks : rightMarks)" :key="'m' + n" :transform="`translate(${cx(w, m.i)} ${m.y})`" :class="'k-' + m.kind">
                  <path v-if="m.kind[1] === 'd'" d="M.5-2.500L2.500 0L.5 2.500L-1.500 0Z" />
                  <ellipse v-else-if="m.kind[1] === 'o'" rx="3" ry="3.500" />
                  <path v-else-if="m.kind === 'ra' || m.kind === 'ka' || m.kind === 'ma'" d="M-1-5H1V1L4-2V1L0 5L-4 1V-2L-1 1Z" />
                  <path v-else d="M-1 5H1V-1L4 2V-1L0-5L-4-1V2L-1-1Z" />
                </g>
                <template v-if="w.id === 'left'">
                  <g class="big-price" fill="#4b0082"><text x="0" y="613">1.08950</text><text x="1503" y="477">1.09088</text><text x="1415" y="611">1.08952</text></g>
                  <text x="-2" y="491" class="tiny">#10734892 sell 0.01</text><text x="2" y="495" class="tiny">#10735718 sell 0.01</text>
                  <text x="0" y="579" class="tiny">#10734894 sell 0.01</text><text x="-3" y="582" class="tiny">#10735710 tp</text>
                  <path d="M1554 62h9l-4 5z" fill="#c0c0c0" />
                </template>
                <template v-else>
                  <g class="big-price" fill="#000"><text x="4" y="597">1.08950</text><text x="1507" y="460">1.09088</text><text x="1419" y="597">1.08950</text></g>
                  <rect x="1526" y="55" width="4" height="4" fill="#fff" stroke="#000" /><rect x="1526" y="594" width="4" height="4" fill="#fff" stroke="#000" />
                  <path d="M1564 55h10l-5 6z" fill="#000" />
                </template>
                <text v-for="[t, x] in w.head" :key="t" :x="x" :y="w.headY" class="head">{{ t }}</text>
                <text :x="w.eaX" :y="w.headY - 12" class="sym">KopierMaschine</text>
                <g :transform="`translate(${w.eaX + 72} ${w.headY - 16})`" fill="none" stroke="#000"><circle r="5" /><path d="M-2.500 3Q0 0 2.500 3M-2-2v1M2-2v1" /></g>
                <text :x="w.id === 'left' ? 10 : 15" :y="w.headY - 13" class="sym">{{ w.symbol }}</text>
                <path :d="w.id === 'left' ? 'M-2 68h7l-4 4z' : 'M3 61h7l-4 4z'" />
              </template>

              <template v-else>
                <line v-for="y in p.levels" :key="y" x1="0" x2="100%" :y1="y" :y2="y" class="level crisp" :class="{ azure: p.kind === 'macd' }" />
                <g v-if="p.kind === 'fisher'" class="crisp">
                  <rect v-for="(v, i) in fisher" :key="i" :x="cx(w, i) - 1" :y="barTop(p.base, scaled(w, v))" width="3" :height="Math.abs(scaled(w, v))" :class="v > 0 ? 'up' : 'down'" />
                  <template v-if="w.id === 'left'"><rect v-for="i in [185, 186, 187, 188, 189, 190]" :key="'t' + i" :x="cx(w, i) - 1" :y="668 - fisher[i]" width="3" height="8" fill="red" /></template>
                </g>
                <g v-if="p.kind === 'ao'" class="crisp">
                  <rect v-for="(v, i) in ao" :key="i" :x="cx(w, i) - 1" :y="barTop(p.base, v.v)" width="3" :height="Math.abs(v.v)" :fill="barColor(v.c)" />
                </g>
                <g v-if="p.kind === 'macd'" class="crisp">
                  <rect v-for="(v, i) in macd" :key="i" :x="v.c < 'a' ? cx(w, i) - 1 : cx(w, i)" :y="barTop(p.base, v.v)" :width="v.c < 'a' ? 3 : 1" :height="Math.abs(v.v)" :fill="barColor(v.c)" />
                </g>
                <line x1="0" x2="100%" :y1="p.base" :y2="p.base" stroke="#000" class="crisp" />
                <line v-if="w.id === 'right'" x1="0" x2="100%" :y1="p.kind === 'fisher' ? 661 : 775" :y2="p.kind === 'fisher' ? 661 : 775" stroke="#1e90ff" stroke-width="2" class="crisp" />
                <template v-if="p.kind === 'fisher'">
                  <template v-if="w.id === 'right'"><polyline :points="line(w, osBlue)" stroke="#00f" class="thick" /><polyline :points="line(w, osBlack)" stroke="#000" class="thick" /></template>
                  <polyline :points="series(w, fisherLine, fisherY(w))" :stroke="w.id === 'left' ? '#4b0082' : '#f00'" class="thick" />
                </template>
                <polyline v-if="p.kind === 'ao'" :points="series(w, aoLine)" stroke="#00f" class="thick" />
                <template v-if="p.kind === 'macd'">
                  <polyline :points="line(w, mBlue)" stroke="#00f" class="thick" /><polyline :points="line(w, mRed)" stroke="#f00" class="thick" />
                  <polyline :points="line(w, mSlow)" stroke="#000" class="thick" /><polyline :points="series(w, aoLine, aoOnRight)" stroke="#000" class="thick" />
                </template>
                <text :x="w.id === 'left' ? 0 : 5" :y="p.top + 13" class="sym">{{ p.label }}</text>
              </template>
            </g>
          </svg>
          <svg class="scale" :height="p.h">
            <g :transform="`translate(0 ${-p.top - 1})`">
              <g v-for="(s, n) in p.labels" :key="n">
                <rect v-if="s.bg" x="1" :y="s.y - 6" :width="s.t.length > 3 ? 40 : 4 + s.t.length * 5" height="12" :fill="s.bg" />
                <path v-if="s.tick" :d="`M0 ${s.y}h3`" stroke="#000" class="crisp" />
                <text :x="p.kind === 'price' ? 5 : 3" :y="s.y + 3" :fill="s.bg ? '#fff' : '#000'">{{ s.t }}</text>
              </g>
            </g>
          </svg>
        </div>
        <div class="times"><span v-for="t in w.times" :key="t">{{ t }}</span></div>

        <form class="kopier" @submit.prevent>
          <h2>Kopier Maschine<button type="button" aria-label="Закрыть">X</button></h2>
          <div class="kbody">
            <div class="kcol">
              <div class="switch"><button type="button" class="off">OFF</button><button type="button" class="go">ON</button><span v-if="w.id === 'left'">Master: 88444072</span></div>
              <div v-if="w.id === 'right'" class="opts">
                <button type="button" class="k tall">Select Master Account V</button>
                <p>88444072</p>
                <button type="button" class="k yes">Master Lot = ON</button>
                <div class="duo"><button type="button" class="k">Fix Lot = OFF</button><input aria-label="Fix Lot" /></div>
                <button type="button" class="k">Proportional Lot = OFF</button>
                <button type="button" class="k">Reverse Trade = OFF</button>
                <div class="duo"><button type="button" class="k">Deviation = OFF</button><input aria-label="Deviation" /></div>
              </div>
            </div>
            <div v-if="w.id === 'right'" class="kcol modes"><button v-for="m in copyModes" :key="m" type="button" class="k yes">{{ m }} = ON</button></div>
          </div>
          <footer>Program is ON</footer>
        </form>
        <span class="peak">{{ w.id === 'left' ? '1.09471' : '1.09472' }}</span>
      </div>

      <div class="charttabs">
        <a v-for="(t, n) in w.tabs" :key="n" href="#" :class="{ on: t === w.active }">{{ t }}</a>
        <span class="nav"><i></i><i></i></span>
      </div>

      <div class="terminal">
        <aside><button aria-label="Закрыть">×</button><div>Терминал</div></aside>
        <div class="tmain">
          <div class="tscroll">
            <table>
              <colgroup><col v-for="(c, n) in w.widths" :key="n" :style="{ width: c + 'px' }" /><col /></colgroup>
              <thead><tr><th v-for="(c, n) in columns" :key="n">{{ c }}<i v-if="n === 0" class="sort">△</i></th></tr></thead>
              <tbody v-if="w.id === 'left'">
                <tr v-for="(o, r) in orders" :key="o[0]" :class="{ sel: r === 1, alt: r === 3 }">
                  <td v-for="(v, n) in o" :key="n"><svg v-if="n === 0" class="doc"><use href="#i-doc" /></svg>{{ v }}<b v-if="n === 11" class="x">×</b></td>
                </tr>
              </tbody>
            </table>
            <div v-if="w.id === 'left'" class="vbar"><button aria-label="Вверх"><i class="u"></i></button><i class="thumb"></i><button aria-label="Вниз"><i class="d"></i></button></div>
          </div>
          <div v-if="w.id === 'left'" class="sum"><span>Баланс: 302.61 USD&nbsp; Средства: 300.39&nbsp; Маржа: 8.73&nbsp; Свободная маржа: 291.66&nbsp; Уровень: 3444.43%</span><b>-2.22</b></div>
          <div v-else class="sum"><i class="led"></i><span>Баланс: 78.90 USD&nbsp; Средства: 78.90&nbsp; Свободная маржа: 78.90</span><b>0.00</b></div>
          <nav class="foot"><a v-for="[t, b] in footTabs(w.id)" :key="t" href="#" :class="{ on: t === 'Торговля' }">{{ t }}<sub v-if="b">{{ b }}</sub></a></nav>
        </div>
      </div>
      <footer v-if="w.id === 'right'" class="status">
        <span class="help">Для вызова справки нажмите F1</span><span class="c1">1</span><span class="c2"></span><span class="c3"></span><span class="c3"></span><span class="c3"></span><span class="c3"></span><span class="c3"></span>
        <span class="net"><svg viewBox="0 0 24 14"><path d="M1 1v6M4 1v6M7 1v6M10 1v6M13 1v6M16 1v6M19 1v6M22 1v6" stroke="#6b7d10" stroke-width="2" /><path d="M1 12v2M4 11v3M7 10v4M10 9v5M13 8v6M16 7v7M19 6v8M22 5v9" stroke="#174a6a" stroke-width="2" /></svg>194/1 kb</span>
      </footer>
    </section>
    <aside class="behind"><span v-for="(t, n) in ticker" :key="n" :class="t[1]">{{ t[0] }}</span></aside>
  </main>
</template>

<style>
body { margin: 0; background: #3a6ea5; overflow: hidden; }
</style>

<style scoped>
* { box-sizing: border-box; }
.defs { position: absolute; width: 0; height: 0; }
.desk { display: grid; grid-template-columns: minmax(0, 1888fr) minmax(0, 1908fr) 6px; column-gap: 4px; height: 100vh; overflow: hidden; font: 11px/14px Roboto, "Noto Sans", sans-serif; color: #000; }
button, input { font: inherit; color: inherit; padding: 0; margin: 0; border: 0; background: none; border-radius: 0; }
a { color: inherit; text-decoration: none; }
i { font-style: normal; }
.win { position: relative; display: flex; flex-direction: column; background: #d4d0c8; min-width: 0; overflow: hidden; border-right: 2px solid #404040; }
.win > * { flex: none; }
.left { padding-right: 3px; }
.right { padding: 0 4px; border-left: 1px solid #fff; }

.title { display: flex; height: 10px; overflow: hidden; background: #00f; color: #fff; font-weight: 700; font-size: 12px; line-height: 6px; }
.right .title { height: 3px; background: #008000; }
.logo { width: 8px; background: #e02020; margin-right: 1px; }
.title .sys { margin-top: -6px; }
.sys { display: flex; margin-left: auto; align-items: center; }
.sys button { width: 15px; height: 13px; margin-right: 1px; background: #d4d0c8; border: 1px solid; border-color: #fff #404040 #404040 #fff; color: #000; display: flex; justify-content: center; align-items: center; }
.sys button:last-child { margin-left: 2px; margin-right: 2px; }
.sys svg { width: 12px; height: 10px; }

.menubar { display: flex; align-items: center; height: 20px; padding-left: 4px; }
.menubar a { margin-left: 16px; }
.menubar .ic + a { margin-left: 6px; }
.left .menubar, .left .toolbar { margin-left: -10px; }
.right .menubar a { color: #808080; }
.ic { width: 16px; height: 16px; display: block; flex: none; }
.ic.big { width: 18px; height: 18px; }

.toolbar { display: flex; align-items: center; height: 28px; border-top: 1px solid #808080; border-bottom: 1px solid #808080; box-shadow: inset 0 1px #fff; }
.grip { width: 3px; height: 20px; margin: 0 3px 0 2px; background: repeating-linear-gradient(#808080 0 1px, transparent 1px 3px); }
.sep { width: 1px; height: 21px; background: #808080; margin: 0 5px 0 3px; }
.sep.wide { margin: 0 3px; }
.edge { width: 2px; height: 25px; background: #808080; border-right: 1px solid #fff; }
.tb { width: 26px; height: 24px; margin-right: 2px; display: flex; align-items: center; justify-content: center; flex: none; color: #505050; }
.tb.on { border: 1px solid; border-color: #808080 #fff #fff #808080; background: #ebe8e3; }
.tb.hot { border: 1px solid; border-color: #fff #808080 #808080 #fff; color: #000; }
.tb.arrows { width: 32px; }
.caret { border: 3px solid transparent; border-top-color: #000; margin: 3px 0 0 2px; }
.order { display: flex; align-items: center; gap: 1px; margin: 0 8px 0 1px; }
.tools-end { margin-left: auto; display: flex; align-items: center; gap: 12px; padding-right: 6px; }
.bubble { width: 22px; height: 20px; position: relative; }
.bubble::before { content: ""; position: absolute; left: 0; top: 8px; width: 14px; height: 10px; border-radius: 50%; background: #eee; box-shadow: 0 1px 1px #999; }
.bubble b { position: absolute; right: 0; top: 0; width: 17px; height: 17px; border-radius: 50%; background: #e23218; color: #fff; font-weight: 400; text-align: center; line-height: 17px; }
.tip { position: absolute; left: 216px; top: 56px; z-index: 5; border: 1px solid #000; background: #ffffe1; padding: 0 1px; width: 77px; height: 16px; white-space: nowrap; }

.chart { position: relative; background: #fff; border-top: 1px solid #404040; padding-top: 2px; border-right: 1px solid #fff; }
.right .chart { border-left: 1px solid #404040; padding-left: 3px; }
.pane { display: flex; border-top: 1px solid #000; }
.plot { flex: 1; min-width: 0; width: 0; display: block; border-right: 1px solid #000; border-bottom: 1px solid #000; }
.right .plot { border-left: 1px solid #000; }
.scale { width: 45px; flex: none; display: block; font-size: 9px; }
.plot, .scale { overflow: hidden; }
.crisp { shape-rendering: crispEdges; }
.ghost { fill: none; stroke: #ececec; stroke-dasharray: 3 3; }
.navy { stroke: #00008b; stroke-dasharray: 9 6 3 6; }
.indigo { stroke: #4b0082; fill: none; }
.session { stroke: #4b0082; stroke-dasharray: 3 3; }
.cursor { stroke: #000; stroke-dasharray: 18 6; }
.level { stroke: #000; stroke-dasharray: 9 3 3 3 3 3; }
.level.azure { stroke: #1e90ff; }
.thick { fill: none; stroke-width: 2; shape-rendering: crispEdges; }
.thin { fill: none; stroke-width: 1; shape-rendering: crispEdges; }
.left .c-g { --e: #228b22; --f: #3cb371; }
.left .c-r { --e: #a52a2a; --f: #ff6347; }
.right .c-g { --e: #006400; --f: #90ee90; }
.right .c-r { --e: #b22222; --f: #ffb6c1; }
.c-d { --e: #000; --f: #000; }
.wick, .edge-box { fill: var(--e); }
.body { fill: var(--f); }
.left .up { fill: #228b22; }
.left .down { fill: #f00; }
.right .up { fill: #3cb371; }
.right .down { fill: #ffb6c1; }
.k-rd, .k-ra { fill: #f00; }
.k-bd, .k-ba { fill: #00f; }
.k-ga { fill: #2e8b57; }
.k-ka, .k-ku, .k-ko { fill: #000; }
.k-co { fill: #0ff; }
.k-ma, .k-mu { fill: #000; stroke: #f0f; stroke-width: 1; }
.big-price { font-size: 16px; }
.tiny { font-size: 9px; }
.head { font: 13px "Liberation Sans", Arial, sans-serif; }
.mur { font: 11px "Liberation Sans", Arial, sans-serif; text-anchor: middle; }
.sym { font-size: 10px; }
.times { display: flex; height: 20px; overflow: hidden; font-size: 9px; line-height: 18px; white-space: nowrap; }
.times span { width: 64px; flex: none; position: relative; }
.left .times { text-indent: -5px; }
.left .times span:first-child { width: 59px; }
.left .times span + span { text-indent: 0; }
.right .times { padding-left: 1px; }
.times span + span::before { content: ""; position: absolute; left: 0; top: 0; width: 1px; height: 3px; background: #000; }

.kopier { position: absolute; left: -4px; top: 18px; width: 399px; background: #fff; border: 1px solid #00f; font: 16px/18px "Liberation Sans", Arial, sans-serif; z-index: 2; text-align: center; }
.right .kopier { left: 4px; }
.kopier h2 { margin: 0; background: #00f; color: #fff; font: inherit; line-height: 26px; height: 25px; position: relative; }
.kopier h2 button { position: absolute; right: 8px; top: 0; line-height: 26px; }
.kbody { display: flex; height: 59px; border-bottom: 2px solid #00f; }
.right .kbody { height: 300px; }
.kcol { flex: 1; }
.right .kcol:first-child { border-right: 2px solid #00f; flex: 0 0 200px; }
.switch { display: flex; gap: 10px; padding: 9px 0 0 8px; }
.switch button { width: 60px; height: 25px; border-radius: 1px; }
.switch .off { background: #808080; color: #222; }
.switch .go { background: #90ee90; }
.switch span { padding-left: 15px; line-height: 26px; }
.opts, .modes { display: flex; flex-direction: column; gap: 2px; font-size: 13px; }
.opts { padding: 6px 18px 0 19px; }
.opts p { margin: 0; height: 17px; line-height: 18px; }
.modes { padding: 4px 18px 0 20px; }
.k { height: 20px; border: 1px solid #000; border-radius: 1px; background: #fff; line-height: 18px; font-size: 13px; white-space: nowrap; }
.k.tall { height: 25px; }
.k.yes { background: #90ee90; }
.duo { display: flex; gap: 2px; }
.duo .k { width: 100px; }
.duo input { width: 58px; border: 1px solid #00f; background: #fff; }
.kopier footer { height: 47px; line-height: 48px; }
.peak { position: absolute; left: 375px; top: 30px; z-index: 3; font-size: 16px; line-height: 18px; color: #4b0082; }
.right .peak { left: 385px; color: #000; }

.charttabs { display: flex; height: 20px; margin-top: 2px; border-top: 1px solid #000; color: #505050; white-space: nowrap; border-bottom: 1px solid #fff; }
.charttabs a { padding: 2px 11px 0; position: relative; line-height: 15px; height: 17px; }
.left .charttabs a:first-child { padding-left: 6px; }
.right .charttabs { border-left: 1px solid #404040; }
.right .charttabs a:first-child { padding-left: 16px; }
.charttabs a::after, .foot a::after { content: ""; position: absolute; right: 0; top: 3px; width: 1px; height: 12px; background: #505050; }
.charttabs a.on { background: #fff; border: 1px solid #000; border-top: 0; color: #000; padding: 2px 10px 0; }
.charttabs a.on::after, .foot a.on::after { display: none; }
.nav { margin-left: auto; display: flex; gap: 12px; padding: 5px 8px 0 0; }
.nav i { border: 4px solid transparent; border-right-color: #808080; border-left-width: 0; height: 8px; }
.nav i + i { border-left: 4px solid #808080; border-right-width: 0; }

.terminal { display: flex; margin-top: 4px; }
.terminal aside { width: 15px; flex: none; display: flex; flex-direction: column; align-items: center; padding-right: 2px; }
.left .terminal aside { margin-left: -9px; }
.terminal aside button { height: 13px; line-height: 10px; font-size: 13px; font-weight: 700; }
.terminal aside div { flex: 1; width: 13px; background: #008000; color: #d4e8d4; writing-mode: vertical-rl; transform: rotate(180deg); line-height: 13px; padding-top: 3px; }
.tmain { flex: 1; min-width: 0; background: #fff; border-left: 1px solid #808080; }
.right .tmain { margin-right: 2px; }
.tscroll { display: flex; }
table { width: 100%; table-layout: fixed; border-collapse: separate; border-spacing: 0; flex: 1; }
th { background: #d4d0c8; font-weight: 400; text-align: right; height: 17px; padding: 0 5px; border: 1px solid; border-color: #808080 #808080 #404040 #fff; line-height: 14px; }
th:first-child, td:first-child { text-align: left; }
.sort { color: #fff; margin-left: 16px; font-size: 9px; line-height: 9px; text-shadow: 0 1px #808080; }
td { height: 20px; padding: 0 3px; text-align: right; border-right: 1px solid #c0c0c0; border-bottom: 1px solid #c0c0c0; line-height: 18px; }
.doc { width: 14px; height: 16px; vertical-align: middle; margin: 0 5px 0 0; }
.sel td { background: #0a246a; color: #fff; }
.alt td { background: #ebebeb; }
.x { margin: 0 4px 0 10px; color: #808080; font-size: 14px; line-height: 12px; }
.vbar { width: 17px; display: flex; flex-direction: column; background: #f0eeea; }
.vbar button, .thumb { background: #d4d0c8; border: 1px solid; border-color: #fff #404040 #404040 #fff; height: 17px; display: flex; justify-content: center; align-items: center; }
.thumb { height: 57px; margin-bottom: auto; }
.vbar i.u { border: 4px solid transparent; border-bottom-color: #000; border-top: 0; }
.vbar i.d { border: 4px solid transparent; border-top-color: #000; border-bottom: 0; }
.sum { display: flex; background: #c8c8c8; font-weight: 700; font-size: 12px; height: 8px; overflow: hidden; padding: 2px 40px 0 22px; line-height: 15px; justify-content: space-between; white-space: nowrap; }
.right .sum { height: 21px; padding: 3px 5px 0 7px; margin-bottom: 60px; }
.right .sum b { margin-left: auto; }
.led { width: 7px; height: 7px; border: 1px solid #808080; border-radius: 50%; margin: 4px 7px 0 0; background: #eee; }
.foot { display: flex; background: #d4d0c8; border-top: 1px solid #000; height: 20px; color: #505050; white-space: nowrap; padding-left: 2px; }
.foot a { position: relative; padding: 3px 10px 0 9px; line-height: 14px; height: 18px; }
.foot a.on { background: #fff; color: #000; border: 1px solid #000; border-top: 0; padding: 3px 8px 0; }
.foot sub { color: #e02030; font: 700 8px/8px "DejaVu Sans", sans-serif; margin-left: 3px; vertical-align: -3px; }
.status { display: flex; height: 24px; margin-top: 4px; border-top: 1px solid #808080; box-shadow: inset 0 1px #fff; }
.status span { border-left: 1px solid #808080; margin-top: 3px; padding-left: 4px; line-height: 20px; }
.status .help { flex: 1; border: 0; padding-left: 1px; }
.status .c1 { width: 110px; }
.status .c2 { width: 100px; }
.status .c3 { width: 70px; }
.status .net { width: 132px; display: flex; gap: 4px; }
.net svg { width: 24px; height: 14px; margin-top: 2px; }
.behind { height: 245px; background: #14202c; overflow: hidden; font: 11px/13px "Liberation Mono", monospace; display: flex; flex-direction: column; align-items: flex-end; margin-left: -1px; }
.g { color: #20d060; }
.y { color: #d8d040; }
</style>
